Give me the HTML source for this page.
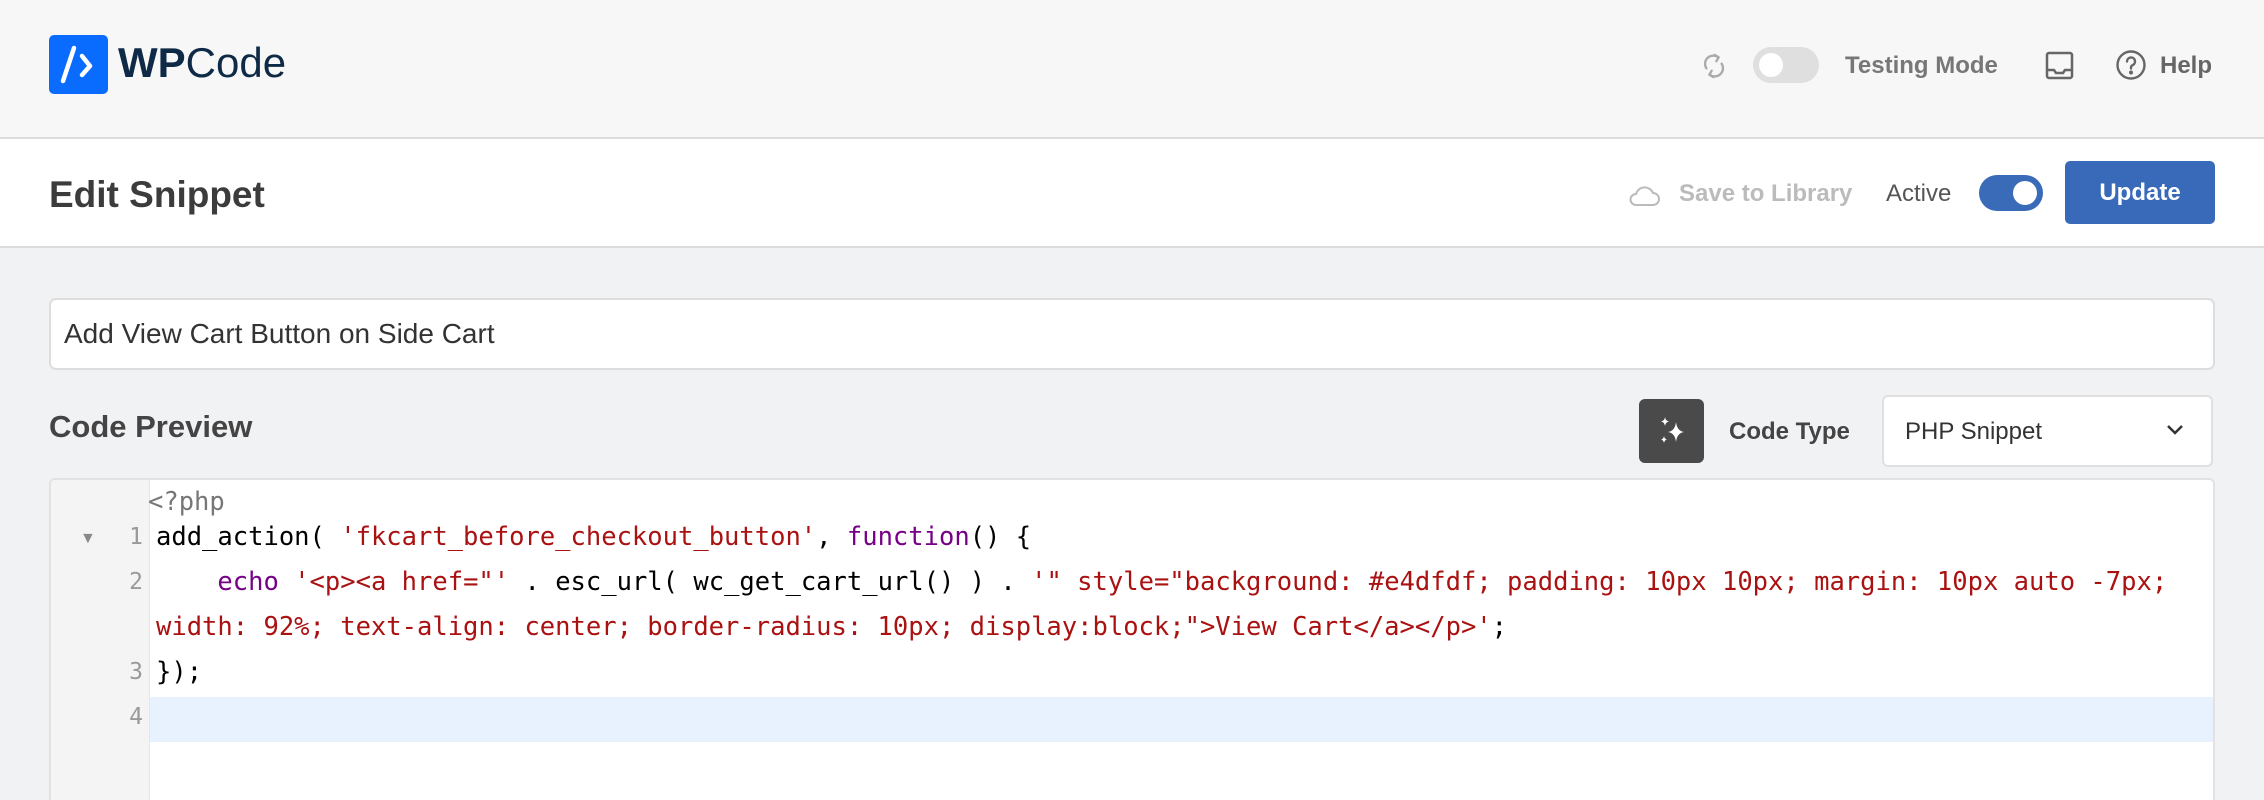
<!DOCTYPE html>
<html><head><meta charset="utf-8"><style>
*{margin:0;padding:0;box-sizing:border-box}
html,body{width:2264px;height:800px;overflow:hidden}
body{background:#f1f2f4;font-family:"Liberation Sans",sans-serif;position:relative}
.a{position:absolute}
.hdr{left:0;top:0;width:2264px;height:139px;background:#f7f7f7;border-bottom:2px solid #dcdcdc}
.bar2{left:0;top:139px;width:2264px;height:109px;background:#fff;border-bottom:2px solid #dcdcdc}
.t{white-space:nowrap;line-height:1}
.code{font-family:"DejaVu Sans Mono","Liberation Mono",monospace;font-size:25.5px;white-space:pre;line-height:1;color:#000}
.s{color:#a11}.k{color:#708}
.ln{font-family:"DejaVu Sans Mono",monospace;font-size:23px;color:#999;line-height:1;width:40px;text-align:right}
</style></head><body>
<div class="a hdr"></div>
<div class="a" style="left:49px;top:35px;width:59px;height:59px;background:#0a6cff;border-radius:5px">
<svg width="59" height="59" viewBox="0 0 59 59"><path d="M25 13 L14 46" stroke="#fff" stroke-width="4.5" stroke-linecap="round" fill="none"/><path d="M33 21 L41 31 L33 40" stroke="#fff" stroke-width="4.5" stroke-linecap="round" stroke-linejoin="round" fill="none"/></svg></div>
<div class="a t" style="left:118px;top:42px;font-size:42px;color:#0f2a46"><b>WP</b><span style="font-weight:300">Code</span></div>
<svg class="a" style="left:1700px;top:52px" width="28" height="28" viewBox="0 0 24 24" fill="none" stroke="#aaa" stroke-width="2" stroke-linecap="round" stroke-linejoin="round"><path d="M5.5 14a7 7 0 0 1 10-9.5"/><path d="M18.5 10a7 7 0 0 1-10 9.5"/><path d="M12.5 2.5l3.5 2-2 3.5"/><path d="M11.5 21.5l-3.5-2 2-3.5"/></svg>
<div class="a" style="left:1753px;top:47px;width:66px;height:36px;border-radius:18px;background:#dfdfdf"><div class="a" style="left:6px;top:6px;width:24px;height:24px;border-radius:50%;background:#fff"></div></div>
<div class="a t" style="left:1845px;top:54px;font-size:24px;font-weight:bold;color:#777">Testing Mode</div>
<svg class="a" style="left:2045px;top:51px" width="29" height="29" viewBox="0 0 29 29" fill="none" stroke="#666" stroke-width="2.5"><rect x="2" y="2" width="25" height="25" rx="2"/><path d="M2 19h7l2 3h7l2-3h7"/></svg>
<svg class="a" style="left:2115px;top:49px" width="32" height="32" viewBox="0 0 32 32" fill="none" stroke="#666" stroke-width="2.4"><circle cx="16" cy="16" r="13.5"/><path d="M12 12.5a4 4 0 1 1 5.5 3.7c-1 .5-1.5 1.2-1.5 2.3v1" stroke-linecap="round"/><circle cx="16" cy="23.5" r="0.8" fill="#666"/></svg>
<div class="a t" style="left:2160px;top:54px;font-size:24px;font-weight:bold;color:#666">Help</div>

<div class="a bar2"></div>
<div class="a t" style="left:49px;top:176px;font-size:37px;font-weight:bold;color:#3c3c3c">Edit Snippet</div>
<svg class="a" style="left:1628px;top:183px" width="32" height="24" viewBox="0 0 32 24" fill="none" stroke="#bbb" stroke-width="2"><path d="M8 22h17a6 6 0 0 0 0-12 9 9 0 0 0-17 1 5.5 5.5 0 0 0 0 11z"/></svg>
<div class="a t" style="left:1679px;top:182px;font-size:24px;font-weight:bold;color:#bbb">Save to Library</div>
<div class="a t" style="left:1886px;top:182px;font-size:24px;color:#555">Active</div>
<div class="a" style="left:1979px;top:175px;width:64px;height:36px;border-radius:18px;background:#3a6bb8"><div class="a" style="left:34px;top:6px;width:24px;height:24px;border-radius:50%;background:#fff"></div></div>
<div class="a" style="left:2065px;top:161px;width:150px;height:63px;border-radius:5px;background:#386ab9;color:#fff;font-size:24px;font-weight:bold;text-align:center;line-height:63px">Update</div>

<div class="a" style="left:49px;top:298px;width:2166px;height:72px;background:#fff;border:2px solid #ddd;border-radius:7px"></div>
<div class="a t" style="left:64px;top:320px;font-size:28px;color:#333">Add View Cart Button on Side Cart</div>

<div class="a t" style="left:49px;top:411px;font-size:31px;font-weight:bold;color:#444">Code Preview</div>
<div class="a" style="left:1639px;top:399px;width:65px;height:64px;border-radius:6px;background:#4a4a4a">
<svg width="65" height="64" viewBox="0 0 65 64" fill="#fff"><path d="M37 23 Q38 32 45 33 Q38 34 37 43 Q36 34 29 33 Q36 32 37 23Z"/><path d="M26 18 Q26.5 22 30 22.5 Q26.5 23 26 27 Q25.5 23 22 22.5 Q25.5 22 26 18Z"/><path d="M25 37 Q25.5 40 28 40.5 Q25.5 41 25 44 Q24.5 41 22 40.5 Q24.5 40 25 37Z"/></svg></div>
<div class="a t" style="left:1729px;top:420px;font-size:24px;font-weight:bold;color:#444">Code Type</div>
<div class="a" style="left:1882px;top:395px;width:331px;height:72px;background:#fff;border:2px solid #e0e0e0;border-radius:6px"></div>
<div class="a t" style="left:1905px;top:420px;font-size:24px;color:#333">PHP Snippet</div>
<svg class="a" style="left:2165px;top:423px" width="20" height="14" viewBox="0 0 20 14" fill="none" stroke="#333" stroke-width="2.5"><path d="M3 3l7 7 7-7"/></svg>

<div class="a" style="left:49px;top:478px;width:2166px;height:322px;background:#fff;border:2px solid #e2e2e2;border-bottom:none;border-radius:6px 6px 0 0;overflow:hidden">
<div class="a" style="left:0;top:0;width:99px;height:330px;background:#f4f4f5;border-right:1px solid #e6e6e6"></div>
<div class="a" style="left:99px;top:217px;width:2070px;height:45px;background:#e8f2ff"></div>
</div>
<div class="a" style="left:80px;top:530px;font-size:16px;color:#888">▼</div>
<div class="a ln" style="left:103px;top:526px">1</div>
<div class="a ln" style="left:103px;top:571px">2</div>
<div class="a ln" style="left:103px;top:661px">3</div>
<div class="a ln" style="left:103px;top:706px">4</div>
<div class="a code" style="left:148px;top:490px;color:#777">&lt;?php</div>
<div class="a code" style="left:156px;top:525px">add_action( <span class="s">'fkcart_before_checkout_button'</span>, <span class="k">function</span>() {</div>
<div class="a code" style="left:156px;top:570px">    <span class="k">echo</span> <span class="s">'&lt;p&gt;&lt;a href="'</span> . esc_url( wc_get_cart_url() ) . <span class="s">'" style="background: #e4dfdf; padding: 10px 10px; margin: 10px auto -7px;</span></div>
<div class="a code s" style="left:156px;top:615px">width: 92%; text-align: center; border-radius: 10px; display:block;"&gt;View Cart&lt;/a&gt;&lt;/p&gt;'<span style="color:#000">;</span></div>
<div class="a code" style="left:156px;top:660px">});</div>
</body></html>
